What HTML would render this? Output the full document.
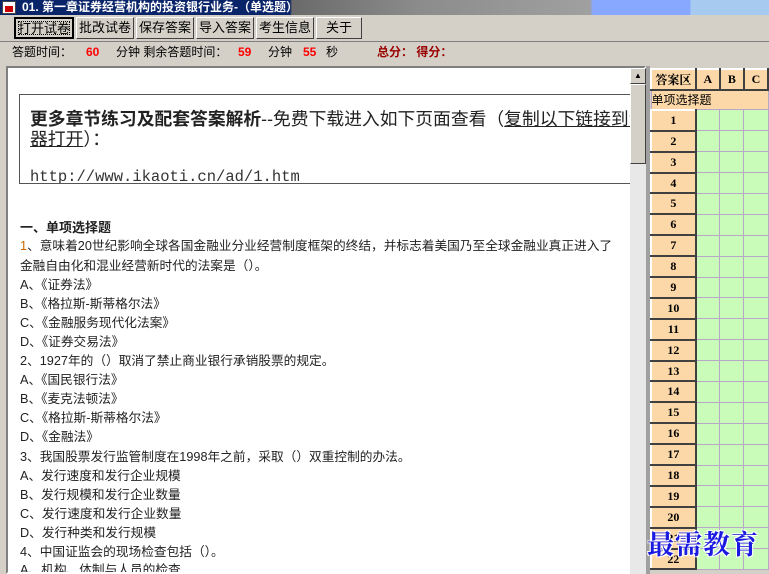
<!DOCTYPE html>
<html><head><meta charset="utf-8"><style>
*{margin:0;padding:0;box-sizing:border-box}
body{width:769px;height:574px;overflow:hidden;background:#d4d0c8;font-family:"Liberation Sans","Noto Sans CJK SC",sans-serif;font-size:12px;position:relative}
.abs{position:absolute}
#title{left:0;top:0;width:769px;height:15px;background:linear-gradient(90deg,#0a246a 0,#0a246a 290px,#6a6a6a 292px,#8c8c8c 420px,#a0a0a0 590px,#88a8ff 593px,#88a8ff 690px,#a6caf0 691px);color:#fff;font-weight:bold;font-size:12px;line-height:15px;padding-left:22px}
.btn{top:17px;height:22px;background:#d4d0c8;border:1px solid;border-color:#fff #404040 #404040 #fff;font-size:13px;line-height:20px;text-align:center}
.lbl{top:44px;font-size:12px;line-height:16px;color:#000}
.red{color:#f00;font-weight:bold}
#content{left:6px;top:66px;width:640px;height:508px;background:#fff;border:2px solid;border-color:#808080 #fff #fff #808080;overflow:hidden}
#sb{left:630px;top:68px;width:16px;height:506px;background:#e8e8e8}
.ln{position:absolute;left:12px;font-size:12.7px;color:#222;white-space:nowrap;line-height:16px}
table{position:absolute;left:650px;top:68px;border-collapse:collapse}
td{border:1px solid #b8a8c8;height:20.9px;padding:0}
td.h{background:#fcd8a8;border:2px solid;border-color:#fff #404040 #404040 #fff;text-align:center;font-weight:bold;font-family:"Liberation Serif","Noto Serif CJK SC",serif;font-size:12px}
td.g{background:#c8fcb8}
</style></head><body>
<div id="title" class="abs">01. 第一章证券经营机构的投资银行业务-（单选题）</div>
<div class="abs" style="left:2px;top:1px;width:14px;height:13px;background:#fff;border:1px solid #444"><div style="position:absolute;left:2px;top:4px;width:8px;height:6px;background:#c00"></div></div>
<div class="abs btn" style="left:14px;width:60px;border:2px solid #000;outline:1px dotted #000;outline-offset:-5px">打开试卷</div>
<div class="abs btn" style="left:76px;width:58px">批改试卷</div>
<div class="abs btn" style="left:136px;width:58px">保存答案</div>
<div class="abs btn" style="left:196px;width:58px">导入答案</div>
<div class="abs btn" style="left:256px;width:58px">考生信息</div>
<div class="abs btn" style="left:316px;width:46px">关于</div>
<div class="abs" style="left:0;top:41px;width:769px;height:1px;background:#808080"></div>
<div class="abs lbl" style="left:12px">答题时间：</div>
<div class="abs lbl red" style="left:86px">60</div>
<div class="abs lbl" style="left:116px">分钟 剩余答题时间：</div>
<div class="abs lbl red" style="left:238px">59</div>
<div class="abs lbl" style="left:268px">分钟</div>
<div class="abs lbl red" style="left:303px">55</div>
<div class="abs lbl" style="left:326px">秒</div>
<div class="abs lbl" style="left:377px;color:#900;font-weight:bold">总分： 得分：</div>
<div id="content" class="abs">
 <div class="abs" style="left:11px;top:26px;width:640px;height:90px;border:1px solid #555;border-right:none;overflow:hidden">
  <div style="position:absolute;left:10px;top:14px;font-size:17.8px;line-height:20px;color:#222;white-space:nowrap"><b>更多章节练习及配套答案解析</b>--免费下载进入如下页面查看（<u>复制以下链接到浏览</u><br><u>器打开</u>）：</div>
  <div style="position:absolute;left:10px;top:73px;font-family:'Liberation Mono',monospace;font-size:15.5px;color:#333">http://www.ikaoti.cn/ad/1.htm</div>
 </div>
 <div class="ln" style="top:152px;font-weight:bold;font-size:13px">一、单项选择题</div>
 <div class="ln" style="top:170px"><span style="color:#c60">1</span>、意味着20世纪影响全球各国金融业分业经营制度框架的终结，并标志着美国乃至全球金融业真正进入了</div>
 <div class="ln" style="top:190px">金融自由化和混业经营新时代的法案是（）。</div>
 <div class="ln" style="top:209px">A、《证券法》</div>
 <div class="ln" style="top:228px">B、《格拉斯-斯蒂格尔法》</div>
 <div class="ln" style="top:247px">C、《金融服务现代化法案》</div>
 <div class="ln" style="top:266px">D、《证券交易法》</div>
 <div class="ln" style="top:285px">2、1927年的（）取消了禁止商业银行承销股票的规定。</div>
 <div class="ln" style="top:304px">A、《国民银行法》</div>
 <div class="ln" style="top:323px">B、《麦克法顿法》</div>
 <div class="ln" style="top:342px">C、《格拉斯-斯蒂格尔法》</div>
 <div class="ln" style="top:361px">D、《金融法》</div>
 <div class="ln" style="top:381px">3、我国股票发行监管制度在1998年之前，采取（）双重控制的办法。</div>
 <div class="ln" style="top:400px">A、发行速度和发行企业规模</div>
 <div class="ln" style="top:419px">B、发行规模和发行企业数量</div>
 <div class="ln" style="top:438px">C、发行速度和发行企业数量</div>
 <div class="ln" style="top:457px">D、发行种类和发行规模</div>
 <div class="ln" style="top:476px">4、中国证监会的现场检查包括（）。</div>
 <div class="ln" style="top:494px">A、机构、体制与人员的检查</div>
</div>
<div id="sb" class="abs">
 <div class="abs" style="left:0;top:0;width:16px;height:16px;background:#d4d0c8;border:1px solid;border-color:#fff #404040 #404040 #fff;font-size:8px;text-align:center;line-height:14px">▲</div>
 <div class="abs" style="left:0;top:16px;width:16px;height:80px;background:#d4d0c8;border:1px solid;border-color:#fff #404040 #404040 #fff"></div>
</div>
<div class="abs" style="left:646px;top:66px;width:4px;height:508px;background:#a0a0a0"></div>
<table>
<tr><td class="h" style="width:47px">答案区</td><td class="h" style="width:25px">A</td><td class="h" style="width:25px">B</td><td class="h" style="width:25px">C</td></tr>
<tr><td colspan="4" style="background:#fcd8a8;font-size:12px;height:20px">单项选择题</td></tr>
<tr><td class="h">1</td><td class="g"></td><td class="g"></td><td class="g"></td></tr>
<tr><td class="h">2</td><td class="g"></td><td class="g"></td><td class="g"></td></tr>
<tr><td class="h">3</td><td class="g"></td><td class="g"></td><td class="g"></td></tr>
<tr><td class="h">4</td><td class="g"></td><td class="g"></td><td class="g"></td></tr>
<tr><td class="h">5</td><td class="g"></td><td class="g"></td><td class="g"></td></tr>
<tr><td class="h">6</td><td class="g"></td><td class="g"></td><td class="g"></td></tr>
<tr><td class="h">7</td><td class="g"></td><td class="g"></td><td class="g"></td></tr>
<tr><td class="h">8</td><td class="g"></td><td class="g"></td><td class="g"></td></tr>
<tr><td class="h">9</td><td class="g"></td><td class="g"></td><td class="g"></td></tr>
<tr><td class="h">10</td><td class="g"></td><td class="g"></td><td class="g"></td></tr>
<tr><td class="h">11</td><td class="g"></td><td class="g"></td><td class="g"></td></tr>
<tr><td class="h">12</td><td class="g"></td><td class="g"></td><td class="g"></td></tr>
<tr><td class="h">13</td><td class="g"></td><td class="g"></td><td class="g"></td></tr>
<tr><td class="h">14</td><td class="g"></td><td class="g"></td><td class="g"></td></tr>
<tr><td class="h">15</td><td class="g"></td><td class="g"></td><td class="g"></td></tr>
<tr><td class="h">16</td><td class="g"></td><td class="g"></td><td class="g"></td></tr>
<tr><td class="h">17</td><td class="g"></td><td class="g"></td><td class="g"></td></tr>
<tr><td class="h">18</td><td class="g"></td><td class="g"></td><td class="g"></td></tr>
<tr><td class="h">19</td><td class="g"></td><td class="g"></td><td class="g"></td></tr>
<tr><td class="h">20</td><td class="g"></td><td class="g"></td><td class="g"></td></tr>
<tr><td class="h">21</td><td class="g"></td><td class="g"></td><td class="g"></td></tr>
<tr><td class="h">22</td><td class="g"></td><td class="g"></td><td class="g"></td></tr>
</table>
<div class="abs" style="left:647px;top:526px;font-family:'Noto Serif CJK SC',serif;font-weight:bold;font-size:27px;color:#1a1ae0;line-height:34px;letter-spacing:1px;text-shadow:1px 1px 0 #fff,-1px -1px 0 #fff,1px -1px 0 #fff,-1px 1px 0 #fff">最需教育</div>
</body></html>
